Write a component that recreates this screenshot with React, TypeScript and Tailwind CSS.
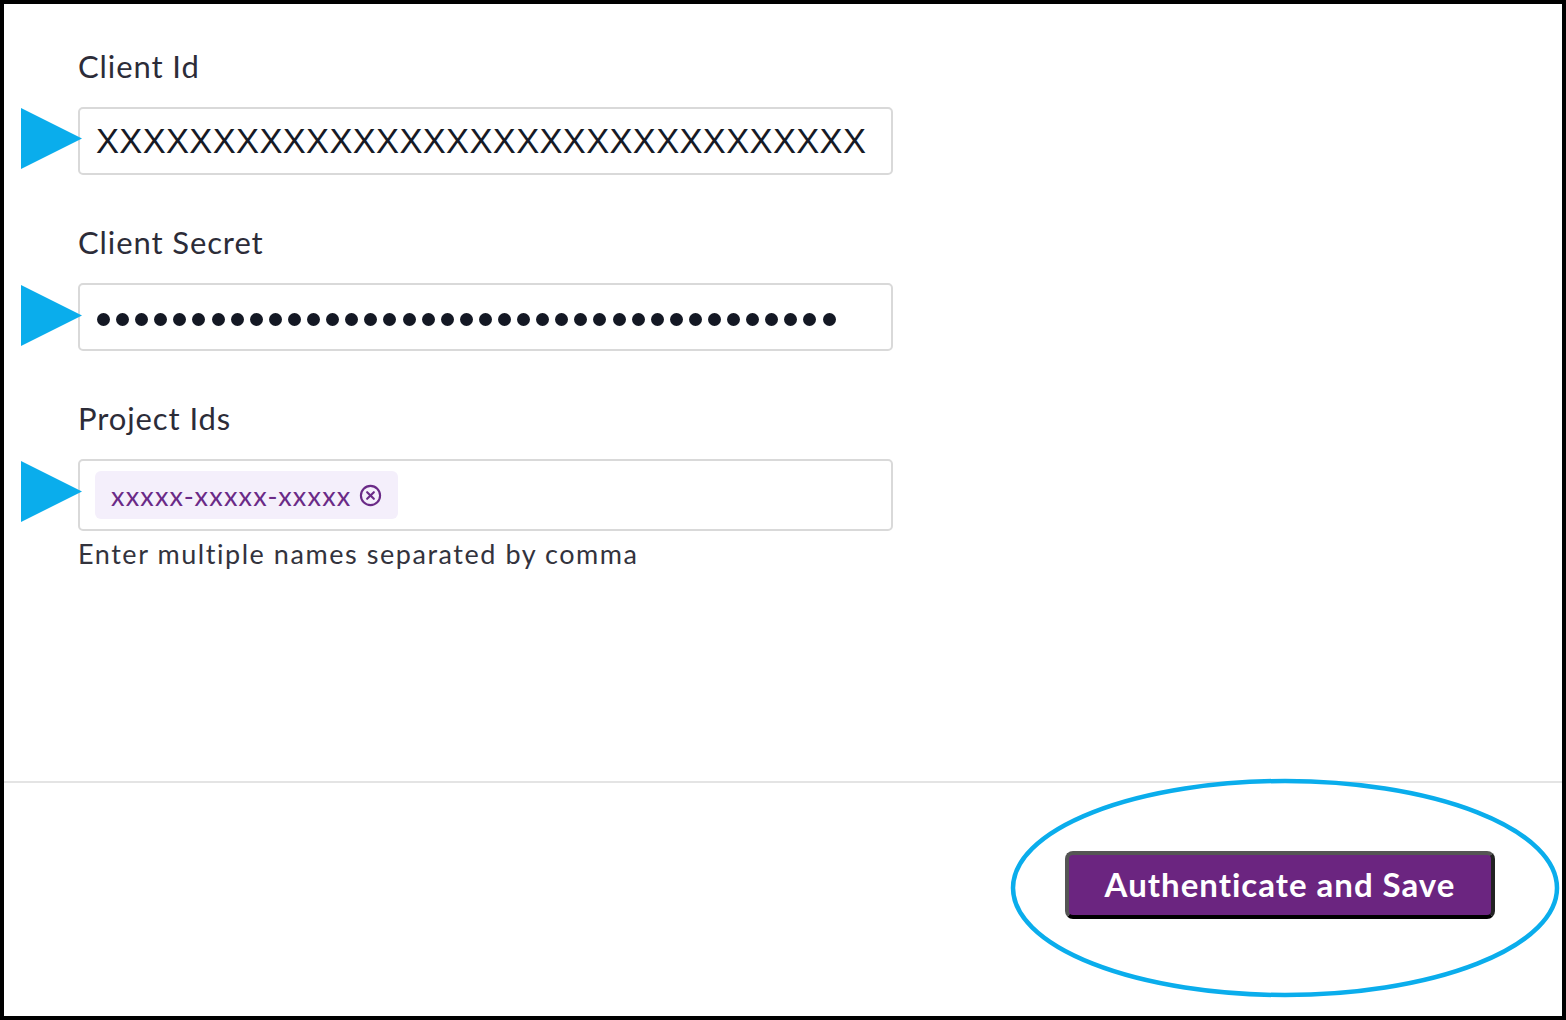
import React from "react";

const font = { fontFamily: "Lato, 'Open Sans', sans-serif" };

function Arrow({ top }: { top: number }) {
  return (
    <svg
      className="absolute left-[17px]"
      style={{ top }}
      width="62"
      height="62"
      viewBox="0 0 62 62"
    >
      <polygon points="0,0 61,30.5 0,61" fill="#0aadec" />
    </svg>
  );
}

function Field({ label, children, h = "h-[68px]" }: { label: string; children: React.ReactNode; h?: string }) {
  return (
    <div className="flex flex-col">
      <label className="text-[31px] leading-[36px] tracking-[0.9px] text-[#2c2c38]">{label}</label>
      <div className={`mt-[23px] flex w-[815px] items-center rounded-[5px] border-2 border-[#d9d9d9] bg-white ${h}`}>
        {children}
      </div>
    </div>
  );
}

export default function App() {
  const dots = Array.from({ length: 39 });
  return (
    <div
      className="relative flex h-[1020px] w-[1566px] flex-col border-4 border-black bg-white"
      style={font}
    >
      <div className="flex flex-1 flex-col gap-[49px] pl-[74px] pt-[44px]">
        <Field label="Client Id">
          <span
            className="pl-[16px] text-[34.5px] leading-none tracking-[0.33px] text-[#161a26]"
            style={{ fontFamily: "'Liberation Sans', Arial, sans-serif" }}
          >
            XXXXXXXXXXXXXXXXXXXXXXXXXXXXXXXXX
          </span>
        </Field>
        <Field label="Client Secret">
          <div className="flex gap-[6.1px] pl-[17px] pt-[4px]">
            {dots.map((_, i) => (
              <span key={i} className="h-[13px] w-[13px] rounded-full bg-[#141824]" />
            ))}
          </div>
        </Field>
        <div className="flex flex-col">
          <Field label="Project Ids" h="h-[72px]">
            <div className="ml-[15px] flex h-[48px] items-center gap-[8px] rounded-[6px] bg-[#f4effb] pl-[16px] pr-[16px]">
              <span className="text-[27px] leading-none tracking-[1.2px] text-[#6a2a87]">xxxxx-xxxxx-xxxxx</span>
              <svg width="23" height="23" viewBox="0 0 24 24" fill="none" stroke="#6a2a87" strokeWidth="2.2" strokeLinecap="round">
                <circle cx="12" cy="12" r="10" />
                <path d="M8.5 8.5l7 7M15.5 8.5l-7 7" />
              </svg>
            </div>
          </Field>
          <p className="mt-[6px] text-[27px] leading-[34px] tracking-[1.55px] text-[#33333d]">
            Enter multiple names separated by comma
          </p>
        </div>
      </div>

      <div className="h-[2px] w-full bg-[#e4e4e4]" />

      <div className="flex h-[233px] items-start justify-end pr-[67px] pt-[68px]">
        <button
          className="flex h-[68px] w-[430px] items-center justify-center rounded-[8px] border-4 border-[#555555] border-b-black border-r-[#222222] bg-[#6b2580] text-[33px] font-bold tracking-[1px] text-white"
          style={font}
        >
          Authenticate and Save
        </button>
      </div>

      <Arrow top={104} />
      <Arrow top={281} />
      <Arrow top={457} />

      <svg
        className="pointer-events-none absolute left-[1001px] top-[770px]"
        width="557"
        height="228"
        viewBox="0 0 557 228"
      >
        <ellipse cx="280" cy="114" rx="272" ry="107" fill="none" stroke="#0aadec" strokeWidth="4.5" />
      </svg>
    </div>
  );
}
